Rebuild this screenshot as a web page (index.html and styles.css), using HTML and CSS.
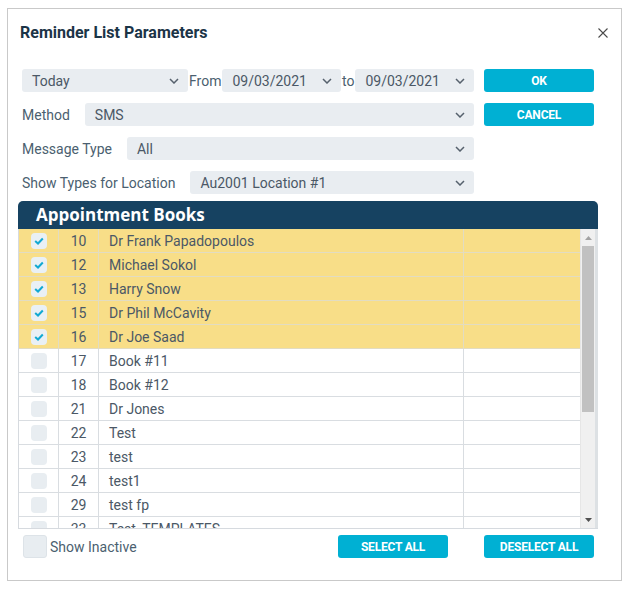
FILE: index.html
```html
<!DOCTYPE html>
<html>
<head>
<meta charset="utf-8">
<link rel="stylesheet" href="styles.css">
</head>
<body>
<div class="dialog">
  <div class="dialog-header">
    <div class="title">Reminder List Parameters</div>
    <button class="close" aria-label="Close">
      <svg width="10" height="10" viewBox="0 0 10 10"><path d="M0.5 0.5 L9.5 9.5 M9.5 0.5 L0.5 9.5" stroke="#4a4a4a" stroke-width="1.1" fill="none"/></svg>
    </button>
  </div>

  <div class="form">
    <div class="fields">
      <div class="row">
        <div class="select w-period"><span>Today</span><svg class="chev" width="10" height="6" viewBox="0 0 10 6"><polyline points="1,1 5,5 9,1" fill="none" stroke="#56616d" stroke-width="1.5"/></svg></div>
        <span class="inline-label">From</span>
        <div class="select w-date"><span>09/03/2021</span><svg class="chev" width="10" height="6" viewBox="0 0 10 6"><polyline points="1,1 5,5 9,1" fill="none" stroke="#56616d" stroke-width="1.5"/></svg></div>
        <span class="inline-label">to</span>
        <div class="select w-date"><span>09/03/2021</span><svg class="chev" width="10" height="6" viewBox="0 0 10 6"><polyline points="1,1 5,5 9,1" fill="none" stroke="#56616d" stroke-width="1.5"/></svg></div>
      </div>
      <div class="row">
        <span class="label">Method</span>
        <div class="select grow"><span>SMS</span><svg class="chev" width="10" height="6" viewBox="0 0 10 6"><polyline points="1,1 5,5 9,1" fill="none" stroke="#56616d" stroke-width="1.5"/></svg></div>
      </div>
      <div class="row">
        <span class="label">Message Type</span>
        <div class="select grow"><span>All</span><svg class="chev" width="10" height="6" viewBox="0 0 10 6"><polyline points="1,1 5,5 9,1" fill="none" stroke="#56616d" stroke-width="1.5"/></svg></div>
      </div>
      <div class="row">
        <span class="label">Show Types for Location</span>
        <div class="select grow"><span>Au2001 Location #1</span><svg class="chev" width="10" height="6" viewBox="0 0 10 6"><polyline points="1,1 5,5 9,1" fill="none" stroke="#56616d" stroke-width="1.5"/></svg></div>
      </div>
    </div>
    <div class="actions">
      <button class="btn">OK</button>
      <button class="btn">CANCEL</button>
    </div>
  </div>

  <div class="books">
    <div class="books-header">Appointment Books</div>
    <div class="books-body">
      <div class="grid">
        <div class="tr sel"><div class="td c-chk"><span class="chk on"><svg width="10" height="8" viewBox="0 0 10 8"><polyline points="1.2,4 4,6.5 8.8,1.5" fill="none" stroke="#12a9d2" stroke-width="2"/></svg></span></div><div class="td c-num">10</div><div class="td c-name">Dr Frank Papadopoulos</div><div class="td c-extra"></div></div>
        <div class="tr sel"><div class="td c-chk"><span class="chk on"><svg width="10" height="8" viewBox="0 0 10 8"><polyline points="1.2,4 4,6.5 8.8,1.5" fill="none" stroke="#12a9d2" stroke-width="2"/></svg></span></div><div class="td c-num">12</div><div class="td c-name">Michael Sokol</div><div class="td c-extra"></div></div>
        <div class="tr sel"><div class="td c-chk"><span class="chk on"><svg width="10" height="8" viewBox="0 0 10 8"><polyline points="1.2,4 4,6.5 8.8,1.5" fill="none" stroke="#12a9d2" stroke-width="2"/></svg></span></div><div class="td c-num">13</div><div class="td c-name">Harry Snow</div><div class="td c-extra"></div></div>
        <div class="tr sel"><div class="td c-chk"><span class="chk on"><svg width="10" height="8" viewBox="0 0 10 8"><polyline points="1.2,4 4,6.5 8.8,1.5" fill="none" stroke="#12a9d2" stroke-width="2"/></svg></span></div><div class="td c-num">15</div><div class="td c-name">Dr Phil McCavity</div><div class="td c-extra"></div></div>
        <div class="tr sel"><div class="td c-chk"><span class="chk on"><svg width="10" height="8" viewBox="0 0 10 8"><polyline points="1.2,4 4,6.5 8.8,1.5" fill="none" stroke="#12a9d2" stroke-width="2"/></svg></span></div><div class="td c-num">16</div><div class="td c-name">Dr Joe Saad</div><div class="td c-extra"></div></div>
        <div class="tr"><div class="td c-chk"><span class="chk"></span></div><div class="td c-num">17</div><div class="td c-name">Book #11</div><div class="td c-extra"></div></div>
        <div class="tr"><div class="td c-chk"><span class="chk"></span></div><div class="td c-num">18</div><div class="td c-name">Book #12</div><div class="td c-extra"></div></div>
        <div class="tr"><div class="td c-chk"><span class="chk"></span></div><div class="td c-num">21</div><div class="td c-name">Dr Jones</div><div class="td c-extra"></div></div>
        <div class="tr"><div class="td c-chk"><span class="chk"></span></div><div class="td c-num">22</div><div class="td c-name">Test</div><div class="td c-extra"></div></div>
        <div class="tr"><div class="td c-chk"><span class="chk"></span></div><div class="td c-num">23</div><div class="td c-name">test</div><div class="td c-extra"></div></div>
        <div class="tr"><div class="td c-chk"><span class="chk"></span></div><div class="td c-num">24</div><div class="td c-name">test1</div><div class="td c-extra"></div></div>
        <div class="tr"><div class="td c-chk"><span class="chk"></span></div><div class="td c-num">29</div><div class="td c-name">test fp</div><div class="td c-extra"></div></div>
        <div class="tr"><div class="td c-chk"><span class="chk"></span></div><div class="td c-num">33</div><div class="td c-name">Test_TEMPLATES</div><div class="td c-extra"></div></div>
      </div>
      <div class="scrollbar">
        <div class="sb-btn"><svg width="7" height="4" viewBox="0 0 7 4"><polygon points="0,4 3.5,0 7,4" fill="#a3a3a3"/></svg></div>
        <div class="sb-track"><div class="sb-thumb"></div></div>
        <div class="sb-btn"><svg width="7" height="4" viewBox="0 0 7 4"><polygon points="0,0 3.5,4 7,0" fill="#505050"/></svg></div>
      </div>
    </div>
  </div>

  <div class="footer">
    <label class="inactive"><span class="box"></span><span>Show Inactive</span></label>
    <div class="footer-actions">
      <button class="btn">SELECT ALL</button>
      <button class="btn">DESELECT ALL</button>
    </div>
  </div>
</div>
</body>
</html>
```

FILE: styles.css
```css
* { box-sizing: border-box; }

html, body {
  margin: 0;
  padding: 0;
  background: #ffffff;
}

body {
  padding: 8px 0 0 7px;
  font-family: Roboto, "Liberation Sans", sans-serif;
  color: #4b5a68;
}

.dialog {
  width: 615px;
  height: 573px;
  border: 1px solid #c9c9c9;
  background: #fff;
  display: flex;
  flex-direction: column;
}

.dialog-header {
  height: 60px;
  padding: 14px 13px 0 12px;
  display: flex;
  justify-content: space-between;
  align-items: flex-start;
}

.title {
  font-size: 16px;
  line-height: 20px;
  font-weight: 700;
  color: #1b3447;
}

.close {
  border: 0;
  background: none;
  padding: 0;
  margin-top: 5px;
  width: 10px;
  height: 10px;
  display: flex;
}

.form {
  display: flex;
  gap: 10px;
  margin: 0 27px 0 14px;
}

.fields {
  flex: 1;
  min-width: 0;
  display: flex;
  flex-direction: column;
  gap: 11px;
}

.row {
  display: flex;
  align-items: center;
  height: 23px;
}

.label {
  font-size: 14px;
  color: #4b5f70;
  margin-right: 15px;
  white-space: nowrap;
}

.inline-label {
  font-size: 14px;
  color: #4b5f70;
  padding: 0 1px;
}

.select {
  height: 23px;
  background: #e9edf1;
  border-radius: 3px;
  display: flex;
  align-items: center;
  justify-content: space-between;
  padding: 0 9px 0 10px;
  font-size: 14px;
  color: #4b5866;
  min-width: 0;
}

.select .chev { flex: none; }

.w-period { width: 166px; flex: none; }
.w-date { flex: 1; }
.grow { flex: 1; }

.actions {
  width: 110px;
  flex: none;
  display: flex;
  flex-direction: column;
  gap: 11px;
}

.btn {
  height: 23px;
  width: 110px;
  border: 0;
  border-radius: 3px;
  background: #00b0d3;
  color: #fff;
  font-family: Roboto, "Liberation Sans", sans-serif;
  font-weight: 700;
  font-size: 12px;
  letter-spacing: -0.2px;
  padding: 0;
}

.books {
  margin: 7px 23px 0 10px;
}

.books-header {
  height: 28px;
  background: #164261;
  border-radius: 5px 5px 0 0;
  color: #fff;
  font-family: "Open Sans", sans-serif;
  font-weight: 700;
  font-size: 17px;
  line-height: 28px;
  padding-left: 18px;
}

.books-body {
  height: 300px;
  display: flex;
  border-left: 1px solid #d6dadf;
  border-bottom: 1px solid #d6dadf;
  overflow: hidden;
}

.grid {
  flex: 1;
  overflow: hidden;
}

.tr {
  display: flex;
  height: 24px;
  border-bottom: 1px solid #d9dde1;
  background: #fff;
}

.tr.sel {
  background: #f8de88;
  border-bottom-color: #e2dcc2;
}

.td {
  height: 23px;
  display: flex;
  align-items: center;
  font-size: 14px;
  color: #4b5866;
  border-right: 1px solid #d9dde1;
}

.tr.sel .td { border-right-color: #e2dcc2; }

.c-chk { width: 40px; justify-content: center; }
.c-num { width: 40px; justify-content: center; }
.c-name { width: 365px; padding-left: 10px; }
.c-extra { flex: 1; border-right: 0; }

.chk {
  width: 16px;
  height: 16px;
  border-radius: 4px;
  background: #e8edf1;
  display: flex;
  align-items: center;
  justify-content: center;
}

.chk.on { background: #e9f0f5; }

.scrollbar {
  width: 18px;
  background: #f0f0f0;
  border-left: 1px solid #e6e6e6;
  border-right: 3px solid #dde1e4;
  display: flex;
  flex-direction: column;
}

.sb-btn {
  height: 17px;
  display: flex;
  align-items: center;
  justify-content: center;
}

.sb-track {
  flex: 1;
  padding: 0 1px;
}

.sb-thumb {
  height: 166px;
  background: #c1c1c1;
}

.footer {
  display: flex;
  align-items: center;
  margin: 6px 27px 0 15px;
  height: 23px;
}

.inactive {
  display: flex;
  align-items: center;
  gap: 3px;
  font-size: 14px;
  color: #4b5f70;
}

.inactive .box {
  width: 24px;
  height: 23px;
  border-radius: 3px;
  background: #e8edf1;
  border: 1px solid #dde3e8;
}

.footer-actions {
  margin-left: auto;
  display: flex;
  gap: 36px;
}
```
